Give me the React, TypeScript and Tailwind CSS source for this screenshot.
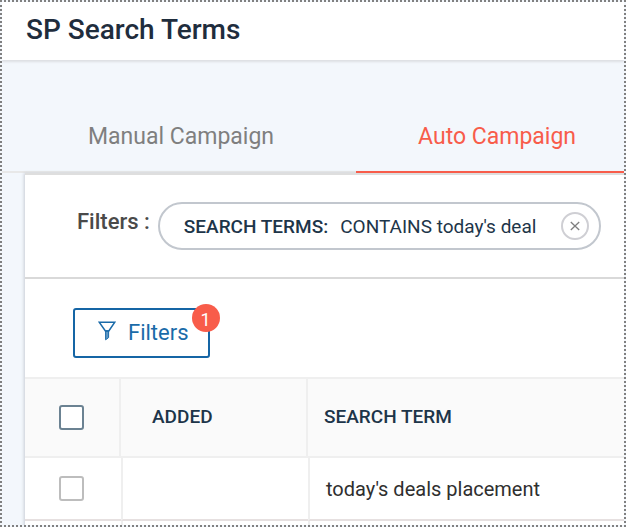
import { useState } from "react";

const tabs = [
  { id: "manual", label: "Manual Campaign" },
  { id: "auto", label: "Auto Campaign" },
];

const terms = ["today's deals placement"];

function FunnelIcon() {
  return (
    <svg
      width="18"
      height="20"
      viewBox="0 0 18 20"
      fill="none"
      stroke="currentColor"
      strokeWidth="1.5"
      aria-hidden="true"
    >
      <path d="M1.2 1.2h15.6L10.8 10H7.4z" />
      <path
        d="M7.6 9.8h3v6.8l-3 2.2z"
        strokeWidth="1"
        fill="currentColor"
        fillOpacity="0.7"
      />
    </svg>
  );
}

function CloseIcon() {
  return (
    <svg
      width="10"
      height="10"
      viewBox="0 0 10 10"
      stroke="currentColor"
      strokeWidth="1.3"
      aria-hidden="true"
    >
      <path d="M0.8 1l8.4 8M9.2 1L0.8 9" />
    </svg>
  );
}

function Header() {
  return (
    <header className="relative bg-white px-6 pt-[9px] pb-[11px] shadow-[0_2px_2px_#dddfe4]">
      <h1 className="text-[28px] leading-[38px] font-medium text-[#1f2d3d]">
        SP Search Terms
      </h1>
    </header>
  );
}

function Tabs() {
  const [active, setActive] = useState("auto");

  return (
    <div
      role="tablist"
      className="flex gap-5 border-b-2 border-[#e8e8e8] pt-[41px] pl-6 text-[23px] leading-8 whitespace-nowrap"
    >
      {tabs.map((tab) => (
        <button
          key={tab.id}
          type="button"
          role="tab"
          aria-selected={active === tab.id}
          onClick={() => setActive(tab.id)}
          className={
            active === tab.id
              ? "-mb-0.5 grow border-b-2 border-[#f85c4a] px-[62px] pt-5 pb-[18px] text-left text-[#f85c4a]"
              : "-mb-0.5 shrink-0 border-b-2 border-transparent px-[62px] pt-5 pb-[18px] text-left text-[#7f7f7f]"
          }
        >
          {tab.label}
        </button>
      ))}
    </div>
  );
}

function ActiveFilters() {
  return (
    <div className="flex items-center gap-2 border-b-2 border-[#d9d9d9] pt-[27px] pb-[27px] pl-[52px]">
      <span className="pb-2 text-[22px] leading-7 font-medium whitespace-nowrap text-[#4a4a4a]">
        Filters :
      </span>
      <div className="flex h-12 items-center rounded-full border-2 border-[#c2c7ce] pr-2.5 pl-6 text-[19px] whitespace-nowrap text-[#1d3549]">
        <span className="pt-0.5 font-medium">SEARCH TERMS:</span>
        <span className="pt-0.5 pl-3">CONTAINS today's deal</span>
        <button
          type="button"
          aria-label="Remove filter"
          className="ml-[25px] flex size-7 items-center justify-center rounded-full border-2 border-[#cfcfd4] text-[#7f7f7f]"
        >
          <CloseIcon />
        </button>
      </div>
    </div>
  );
}

function FiltersButton() {
  return (
    <div className="flex pt-[29px] pb-[19px] pl-12">
      <button
        type="button"
        className="relative flex h-[50px] items-center gap-3 rounded-[3px] border-2 border-[#1565a5] pr-[19px] pb-1 pl-[23px] text-[22px] text-[#1a6ba9]"
      >
        <FunnelIcon />
        <span className="pt-0.5">Filters</span>
        <span className="absolute -top-1.5 -right-3 flex size-7 items-center justify-center rounded-full bg-[#f85c4a] pt-1 text-lg text-white">
          1
        </span>
      </button>
    </div>
  );
}

function TermsTable() {
  return (
    <table className="w-full table-fixed border-separate border-spacing-0 text-left">
      <colgroup>
        <col className="w-24" />
        <col className="w-[187px]" />
        <col />
      </colgroup>
      <thead className="bg-[#fafafa] text-[19px] leading-6 text-[#1d3549]">
        <tr className="h-[81px]">
          <th className="border-y-2 border-r-2 border-[#efefef] px-[34px]">
            <input
              type="checkbox"
              aria-label="Select all"
              className="block size-[25px] appearance-none rounded-[3px] border-2 border-[#6b8292] bg-white"
            />
          </th>
          <th className="border-y-2 border-r-2 border-[#efefef] pb-0.5 pl-[31px] font-medium">
            ADDED
          </th>
          <th className="border-y-2 border-[#efefef] pb-0.5 pl-4 font-medium">
            SEARCH TERM
          </th>
        </tr>
      </thead>
      <tbody className="text-[20px] leading-6 text-[#2f2f2f]">
        {terms.map((term) => (
          <tr key={term} className="h-[63px]">
            <td className="border-b-2 border-[#e6e0e0] px-[34px]">
              <input
                type="checkbox"
                aria-label={`Select ${term}`}
                className="block size-[25px] appearance-none rounded-[3px] border-2 border-[#bdbdbd] bg-white"
              />
            </td>
            <td className="border-b-2 border-l-2 border-b-[#e6e0e0] border-l-[#efefef]" />
            <td className="border-b-2 border-l-2 border-b-[#e6e0e0] border-l-[#efefef] pl-4">
              {term}
            </td>
          </tr>
        ))}
        <tr className="h-4" aria-hidden="true">
          <td />
          <td className="border-l-2 border-[#efefef]" />
          <td className="border-l-2 border-[#efefef]" />
        </tr>
      </tbody>
    </table>
  );
}

export default function App() {
  return (
    <div className="h-screen overflow-hidden border-2 border-dotted border-[#808080] bg-[#f3f7fc] font-[Roboto,sans-serif]">
      <Header />
      <main>
        <Tabs />
        <section className="ml-[23px] border-t-2 border-[#dedede] bg-white shadow-[-1px_0_3px_#c9cdd6]">
          <ActiveFilters />
          <FiltersButton />
          <TermsTable />
        </section>
      </main>
    </div>
  );
}
